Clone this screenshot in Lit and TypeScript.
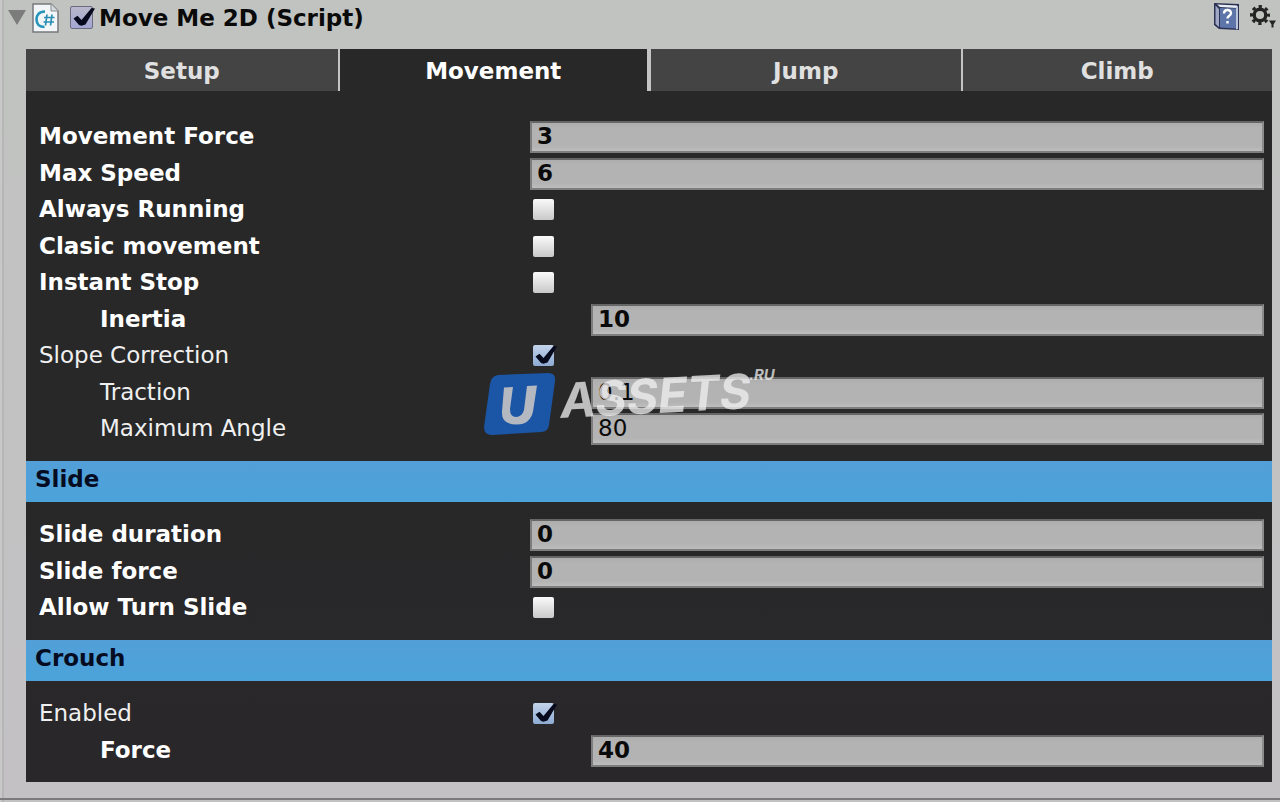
import { LitElement, html, svg, css } from "lit";
import { customElement, property, state } from "lit/decorators.js";

interface Field {
  id: string;
  label: string;
  value: string | boolean;
  bold?: boolean;
  indent?: boolean;
}

const MOVEMENT: Field[] = [
  { id: "movement-force", label: "Movement Force", value: "3", bold: true },
  { id: "max-speed", label: "Max Speed", value: "6", bold: true },
  { id: "always-running", label: "Always Running", value: false, bold: true },
  { id: "clasic-movement", label: "Clasic movement", value: false, bold: true },
  { id: "instant-stop", label: "Instant Stop", value: false, bold: true },
  { id: "inertia", label: "Inertia", value: "10", bold: true, indent: true },
  { id: "slope-correction", label: "Slope Correction", value: true },
  { id: "traction", label: "Traction", value: "0.1", indent: true },
  { id: "maximum-angle", label: "Maximum Angle", value: "80", indent: true },
];

const SLIDE: Field[] = [
  { id: "slide-duration", label: "Slide duration", value: "0", bold: true },
  { id: "slide-force", label: "Slide force", value: "0", bold: true },
  { id: "allow-turn-slide", label: "Allow Turn Slide", value: false, bold: true },
];

const CROUCH: Field[] = [
  { id: "crouch-enabled", label: "Enabled", value: true },
  { id: "crouch-force", label: "Force", value: "40", bold: true, indent: true },
];

const checkMark = svg`<path d="M2.500 11.500L6.500 8.800L10.500 13L20.500 1L24 1.500L14.500 17.500L10.500 18.800L8 18Z" fill="#060a1c"/>`;

@customElement("inspector-row")
export class InspectorRow extends LitElement {
  @property({ attribute: false }) field!: Field;

  static styles = css`
    :host { display: block; }
    .row {
      display: grid;
      grid-template-columns: 491px minmax(0, 1fr);
      align-items: center;
      height: 36px;
    }
    .indent { margin-left: 61px; }
    .label { color: #f0f0f0; line-height: 28px; padding-bottom: 2px; }
    .bold { font-weight: 700; }
    .label.bold { color: #fff; }
    .text {
      box-sizing: border-box;
      width: 100%;
      height: 32px;
      margin: 0;
      padding: 0 5px 2px;
      border: 2px solid #7d7d7d;
      border-top-color: #666;
      border-right-color: #8c8c8c;
      border-radius: 0;
      outline: none;
      background: linear-gradient(#adadad, #b3b3b3 5px, #b3b3b3 23px, #bdbdbd);
      color: #0a0a0a;
      font-family: inherit;
      font-size: inherit;
    }
    .text.bold { font-weight: 700; }
    .toggle { position: relative; display: block; width: 21px; height: 21px; margin: 0 0 2px 3px; }
    .box {
      appearance: none;
      display: block;
      width: 21px;
      height: 21px;
      margin: 0;
      border-radius: 2px;
      background: linear-gradient(#fafafa, #c9c9c9);
    }
    .box:checked { background: linear-gradient(#c3d3ea, #8eabd3); }
    .mark { display: none; position: absolute; left: 0; top: 0; overflow: visible; pointer-events: none; }
    .box:checked + .mark { display: block; }
  `;

  render() {
    const { id, label, value, bold, indent } = this.field;
    const weight = bold ? "bold" : "";
    return html`
      <div class="row ${indent ? "indent" : ""}">
        <label class="label ${weight}" for=${id}>${label}</label>
        ${typeof value === "boolean"
          ? html`<span class="toggle">
              <input class="box" id=${id} type="checkbox" .checked=${value} />
              <svg class="mark" width="21" height="21" viewBox="0 0 21 21" aria-hidden="true">${checkMark}</svg>
            </span>`
          : html`<input class="text ${weight}" id=${id} type="text" .value=${value} />`}
      </div>
    `;
  }
}

@customElement("app-root")
export class AppRoot extends LitElement {
  @state() private tab = "Movement";

  static styles = css`
    :host {
      display: block;
      min-height: 100vh;
      box-sizing: border-box;
      position: relative;
      font: 23px "DejaVu Sans", Verdana, sans-serif;
      background: linear-gradient(90deg, #c8c8c8 2px, #b6b6b6 2px, #b6b6b6 4px, transparent 4px),
        linear-gradient(#c0c3c0, #c2c2c2 40%, #c3c1c4);
    }
    .component { padding: 0 8px 16px 26px; border-bottom: 2px solid #7b797c; }
    .head { display: flex; align-items: center; height: 36px; margin: 0 -6px 13px -18px; }
    .fold { width: 18px; height: 18px; padding: 0; border: 0; background: none; display: flex; }
    .script { margin-left: 6px; }
    .enable { position: relative; width: 23px; height: 23px; margin: 0 0 2px 11px; }
    .enable-box {
      appearance: none;
      display: block;
      box-sizing: border-box;
      width: 23px;
      height: 23px;
      margin: 0;
      border: 1px solid #6d6b80;
      border-radius: 2px;
      background: linear-gradient(#b9b8cc, #a3a6d2);
    }
    .enable-mark { display: none; position: absolute; left: 1px; top: 1px; overflow: visible; pointer-events: none; }
    .enable-box:checked + .enable-mark { display: block; }
    .title { flex: 1; margin-left: 6px; color: #0a0a0a; font-weight: 700; line-height: 28px; }
    .tool { display: flex; padding: 0 0 4px; border: 0; background: none; }
    .gear { margin-left: 9px; }
    .tabs { display: grid; grid-template-columns: repeat(4, minmax(0, 1fr)); height: 42px; }
    .tab {
      margin: 0;
      padding: 2px 0 0;
      border: 0 solid #c4c4c4;
      border-left-width: 2px;
      background: #434443;
      color: #e0e0e0;
      font: inherit;
      font-weight: 700;
    }
    .tab:first-child { border-left-width: 0; }
    .tab.active { background: #272827; color: #fff; border-right-width: 2px; }
    .panel { background: linear-gradient(#272827, #282828 40%, #29272a); }
    .rows { padding: 15px 8px 14px 13px; }
    .rows.first { padding-top: 28px; }
    .rows.last { padding-bottom: 13px; }
    .rows inspector-row:nth-child(even) { margin-top: 1px; }
    .band {
      box-sizing: border-box;
      height: 41px;
      margin: 0;
      padding: 0 9px 4px;
      background: linear-gradient(#539fd8, #4ba3da);
      color: #050c22;
      font-size: inherit;
      line-height: 37px;
    }
    .watermark { position: absolute; left: 484px; top: 356px; width: 320px; height: 90px; overflow: visible; pointer-events: none; }
    .mark-text { font-family: Inter, "Open Sans", sans-serif; font-weight: 700; font-style: italic; }
  `;

  private section(fields: Field[]) {
    return fields.map((f) => html`<inspector-row .field=${f}></inspector-row>`);
  }

  render() {
    return html`
      <main class="component">
        <header class="head">
          <button class="fold" aria-label="Collapse">
            <svg width="18" height="18" viewBox="0 0 18 18"><path d="M0 1h18L9 16z" fill="#7c7c7c" /></svg>
          </button>
          <svg class="script" width="27" height="30" viewBox="0 0 27 30" aria-hidden="true">
            <path d="M1 1h18l7 7v21H1z" fill="#f2f6f8" stroke="#77787c" stroke-width="1.5" />
            <path d="M19 1v7h7" fill="#d5dadd" stroke="#8a8c90" />
            <path d="M13 8.500C7 8.500 4.500 12 4.500 16.500s3 7.500 8 7.500" fill="none" stroke="#2494b8" stroke-width="2.600" />
            <path d="M15 11.500l-1.500 11M20 11.500l-1.500 11M12 14.500h10.500M11.500 19h10.500" stroke="#2a8fb4" stroke-width="1.700" />
          </svg>
          <span class="enable">
            <input class="enable-box" id="enable" type="checkbox" checked />
            <svg class="enable-mark" width="21" height="21" viewBox="0 0 21 21" aria-hidden="true">${checkMark}</svg>
          </span>
          <label class="title" for="enable">Move Me 2D (Script)</label>
          <button class="tool" aria-label="Help">
            <svg width="28" height="28" viewBox="0 0 28 28">
              <path d="M1 1l25 1v26l-20-1-5-4z" fill="#2b3152" />
              <path d="M4 2.500l20 1V6L7 5z" fill="#e9edf6" />
              <path d="M2.500 3.500L6 7v18l-3.500-3z" fill="#9fa9c6" />
              <path d="M7 6l16 .5V26.500L7 25.500z" fill="#5d75a8" />
              <path d="M23 5l2-1v23l-2 .5z" fill="#bcc6da" />
              <path d="M11 11.500c0-4.500 7-4.500 7-.5 0 3-3.500 2.500-3.500 5.500M14.500 19v2.500" fill="none" stroke="#fff" stroke-width="2.400" />
            </svg>
          </button>
          <button class="tool gear" aria-label="Settings">
            <svg width="28" height="28" viewBox="0 0 28 28">
              <g fill="none" stroke="#242424">
                <circle cx="10" cy="13" r="5.800" stroke-width="3.400" />
                <circle cx="10" cy="13" r="8.500" stroke-width="3" stroke-dasharray="3.300 3.376" stroke-dashoffset="1.650" />
              </g>
              <path d="M19 18.500h7l-2.500 4v3h-2v-3z" fill="#242424" />
            </svg>
          </button>
        </header>
        <nav class="tabs" role="tablist">
          ${["Setup", "Movement", "Jump", "Climb"].map(
            (t) => html`<button
              class="tab ${t === this.tab ? "active" : ""}"
              role="tab"
              aria-selected=${t === this.tab ? "true" : "false"}
              @click=${() => (this.tab = t)}
            >${t}</button>`
          )}
        </nav>
        <section class="panel">
          <div class="rows first">${this.section(MOVEMENT)}</div>
          <h2 class="band">Slide</h2>
          <div class="rows">${this.section(SLIDE)}</div>
          <h2 class="band">Crouch</h2>
          <div class="rows last">${this.section(CROUCH)}</div>
        </section>
      </main>
      <svg class="watermark" viewBox="0 0 320 90" aria-hidden="true">
        <path d="M14 19l50-2q8 0 7 8l-6 44q-1 7-8 7l-49 3q-8 0-8-8l6-43q1-8 8-9z" fill="#1b56a6" />
        <path d="M20 31.500l9-.5-3 22q0 8 6 8t8-7l3-24 10-.5-4 26q-3 13-16 13-16 0-15-13z" fill="#b4b9c1" />
        <g class="mark-text" fill="#f0f0f0" fill-opacity="0.75">
          <text x="77" y="62" font-size="48" transform="rotate(-3 77 62)">ASSETS</text>
          <text x="265" y="24" font-size="15">.RU</text>
        </g>
      </svg>
    `;
  }
}
